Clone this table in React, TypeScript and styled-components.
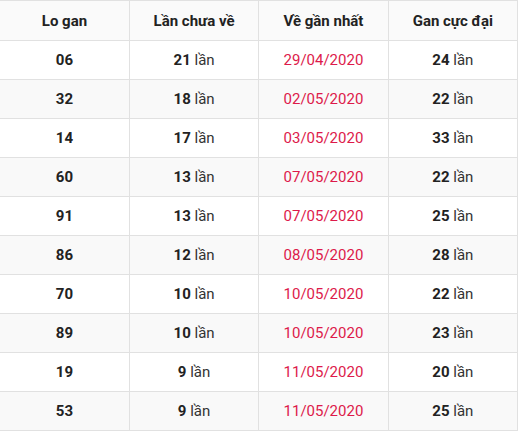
import React from "react";
import styled, { createGlobalStyle } from "styled-components";

const Global = createGlobalStyle`
  html, body { margin: 0; padding: 0; background: #fff; }
  body { font-family: Roboto, "Liberation Sans", Arial, sans-serif; }
`;

const Table = styled.table`
  width: 518px;
  border-collapse: collapse;
  table-layout: fixed;
  font-size: 15px;
  color: #222;
`;

const HeadCell = styled.th`
  height: 39px;
  padding: 0;
  font-weight: 700;
  text-align: center;
  background: #fafafa;
  border: 1px solid #e1e1e1;
  &:first-child { border-left: none; }
`;

const Row = styled.tr`
  &:nth-child(even) td { background: #f9f9f9; }
`;

const Cell = styled.td`
  height: 38px;
  padding: 0;
  text-align: center;
  border: 1px solid #e1e1e1;
  &:first-child { border-left: none; }
`;

const Num = styled.b`
  font-weight: 700;
  color: #222;
`;

const Unit = styled.span`
  color: #333;
`;

const DateText = styled.span`
  color: #dd1a4b;
`;

const rows: [string, number, string, number][] = [
  ["06", 21, "29/04/2020", 24],
  ["32", 18, "02/05/2020", 22],
  ["14", 17, "03/05/2020", 33],
  ["60", 13, "07/05/2020", 22],
  ["91", 13, "07/05/2020", 25],
  ["86", 12, "08/05/2020", 28],
  ["70", 10, "10/05/2020", 22],
  ["89", 10, "10/05/2020", 23],
  ["19", 9, "11/05/2020", 20],
  ["53", 9, "11/05/2020", 25],
];

export default function App() {
  return (
    <>
      <Global />
      <Table>
        <thead>
          <tr>
            <HeadCell>Lo gan</HeadCell>
            <HeadCell>Lần chưa về</HeadCell>
            <HeadCell>Về gần nhất</HeadCell>
            <HeadCell>Gan cực đại</HeadCell>
          </tr>
        </thead>
        <tbody>
          {rows.map(([lo, n, d, max]) => (
            <Row key={lo}>
              <Cell><Num>{lo}</Num></Cell>
              <Cell><Num>{n}</Num> <Unit>lần</Unit></Cell>
              <Cell><DateText>{d}</DateText></Cell>
              <Cell><Num>{max}</Num> <Unit>lần</Unit></Cell>
            </Row>
          ))}
        </tbody>
      </Table>
    </>
  );
}
